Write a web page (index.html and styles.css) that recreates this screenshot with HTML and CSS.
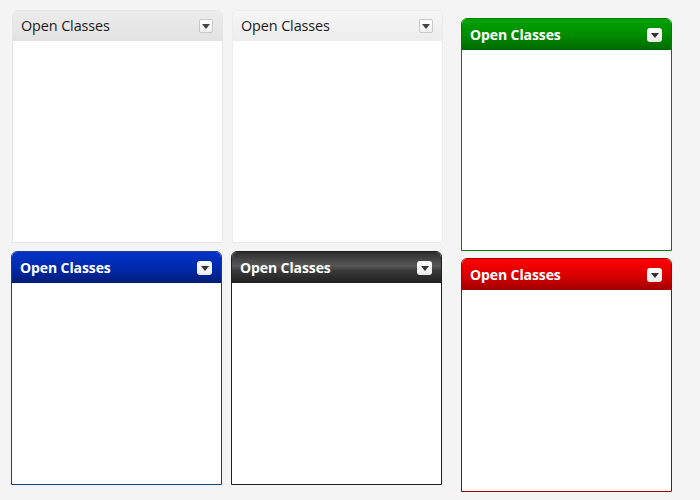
FILE: index.html
```html
<!DOCTYPE html>
<html>
<head>
<meta charset="utf-8">
<link rel="stylesheet" href="styles.css">
</head>
<body>
<div class="layout">
  <div class="grid">
    <div class="panel panel-gray panel-gray-a">
      <div class="panel-head"><span class="title">Open Classes</span><span class="drop"><span class="tri"></span></span></div>
      <div class="panel-body"></div>
    </div>
    <div class="panel panel-gray panel-gray-b">
      <div class="panel-head"><span class="title">Open Classes</span><span class="drop"><span class="tri"></span></span></div>
      <div class="panel-body"></div>
    </div>
    <div class="panel panel-color panel-blue">
      <div class="panel-head"><span class="title">Open Classes</span><span class="drop"><span class="tri"></span></span></div>
      <div class="panel-body"></div>
    </div>
    <div class="panel panel-color panel-dark">
      <div class="panel-head"><span class="title">Open Classes</span><span class="drop"><span class="tri"></span></span></div>
      <div class="panel-body"></div>
    </div>
  </div>
  <div class="side">
    <div class="panel panel-color panel-green">
      <div class="panel-head"><span class="title">Open Classes</span><span class="drop"><span class="tri"></span></span></div>
      <div class="panel-body"></div>
    </div>
    <div class="panel panel-color panel-red panel-tall">
      <div class="panel-head"><span class="title">Open Classes</span><span class="drop"><span class="tri"></span></span></div>
      <div class="panel-body"></div>
    </div>
  </div>
</div>
</body>
</html>
```
FILE: styles.css
```css
html, body {
  margin: 0;
  padding: 0;
  background: #f4f4f4;
  font-family: "Open Sans", "Noto Sans", "Liberation Sans", sans-serif;
}
.layout {
  display: flex;
  align-items: flex-start;
  padding: 10px 0 0 11px;
}
.grid {
  display: grid;
  grid-template-columns: 211px 211px;
  grid-template-rows: 233px 234px;
  column-gap: 9px;
  row-gap: 8px;
}
.side {
  display: flex;
  flex-direction: column;
  gap: 7px;
  margin-left: 19px;
  padding-top: 8px;
}
.panel {
  box-sizing: border-box;
  width: 211px;
  height: 234px;
  display: flex;
  flex-direction: column;
  border: 1px solid #e6e6e6;
  border-radius: 6px 6px 0 0;
  background: #fff;
  overflow: hidden;
}
.panel-green { height: 233px; }
.panel-head {
  box-sizing: border-box;
  height: 30px;
  flex: none;
  display: flex;
  align-items: center;
  justify-content: space-between;
  padding: 0 9px 0 8px;
}
.panel-body { flex: 1; background: #fff; }
.title {
  font-size: 14px;
  line-height: 1;
}
.panel-gray .title { color: #1a1a1a; font-weight: 400; font-size: 14.4px; letter-spacing: -0.1px; }
.panel-gray-a { border-color: #e6e6e6; margin-left: 1px; height: 233px; }
.panel-gray-a .panel-head { background: linear-gradient(#ececec, #e2e2e2); }
.panel-gray-b { border-color: #ececec; margin-left: 1px; height: 233px; }
.panel-gray-b .panel-head { background: linear-gradient(#f6f6f6, #ececec); }

.drop {
  box-sizing: border-box;
  width: 15px;
  height: 14px;
  display: flex;
  align-items: center;
  justify-content: center;
  background: linear-gradient(#ffffff, #ececec);
  border-radius: 3px;
}
.panel-gray .drop {
  border: 1px solid #c8c8c8;
  border-radius: 2px;
  width: 14px;
  height: 14px;
  background: linear-gradient(#ffffff, #f0f0f0);
}
.tri {
  width: 0;
  height: 0;
  border-left: 4px solid transparent;
  border-right: 4px solid transparent;
  border-top: 5px solid #333;
  margin-top: 1px;
}
.panel-gray .tri { border-top-color: #444; }

.panel-color .title { color: #fff; font-weight: 700; letter-spacing: -0.1px; }
.panel-color .panel-head { height: 31px; padding: 0 9px 0 8px; }
.panel-green { border-color: #007d00; }
.panel-green .panel-head { background: linear-gradient(#00a300, #008a00 55%, #006a00); }
.panel-blue { border-color: #1c3c8c; }
.panel-blue .panel-head { background: linear-gradient(#0033c8, #0029a8 55%, #001c78); }
.panel-dark { border-color: #1e1e1e; }
.panel-dark .panel-head { background: linear-gradient(#2e2e2e, #585858 45%, #3a3a3a 60%, #202020); }
.panel-red { border-color: #a00000; }
.panel-red .panel-head { background: linear-gradient(#ff0000, #d80000 55%, #a00000); }
```
